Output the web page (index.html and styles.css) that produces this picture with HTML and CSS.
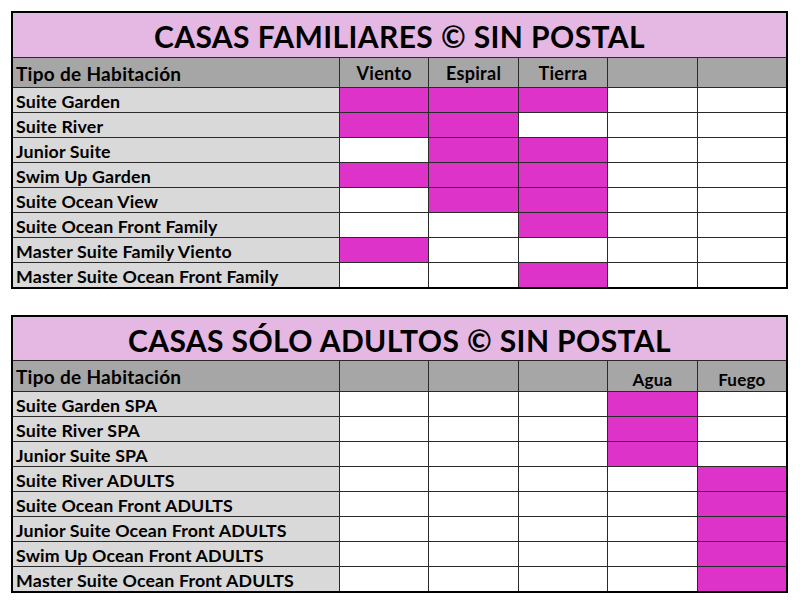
FILE: index.html
```html
<!DOCTYPE html>
<html lang="es">
<head>
<meta charset="utf-8">
<link rel="stylesheet" href="styles.css">
<title>Casas</title>
</head>
<body>
<div class="page">
  <div class="sheet">
    <div class="title">CASAS FAMILIARES © SIN POSTAL</div>
    <div class="hd first">Tipo de Habitación</div>
    <div class="hd">Viento</div>
    <div class="hd">Espiral</div>
    <div class="hd">Tierra</div>
    <div class="hd"></div>
    <div class="hd"></div>

    <div class="name">Suite Garden</div>
    <div class="c on"></div><div class="c on"></div><div class="c on"></div><div class="c"></div><div class="c"></div>
    <div class="name">Suite River</div>
    <div class="c on"></div><div class="c on"></div><div class="c"></div><div class="c"></div><div class="c"></div>
    <div class="name">Junior Suite</div>
    <div class="c"></div><div class="c on"></div><div class="c on"></div><div class="c"></div><div class="c"></div>
    <div class="name">Swim Up Garden</div>
    <div class="c on"></div><div class="c on"></div><div class="c on"></div><div class="c"></div><div class="c"></div>
    <div class="name">Suite Ocean View</div>
    <div class="c"></div><div class="c on"></div><div class="c on"></div><div class="c"></div><div class="c"></div>
    <div class="name">Suite Ocean Front Family</div>
    <div class="c"></div><div class="c"></div><div class="c on"></div><div class="c"></div><div class="c"></div>
    <div class="name">Master Suite Family Viento</div>
    <div class="c on"></div><div class="c"></div><div class="c"></div><div class="c"></div><div class="c"></div>
    <div class="name">Master Suite Ocean Front Family</div>
    <div class="c"></div><div class="c"></div><div class="c on"></div><div class="c"></div><div class="c"></div>
  </div>

  <div class="sheet second">
    <div class="title">CASAS SÓLO ADULTOS © SIN POSTAL</div>
    <div class="hd first">Tipo de Habitación</div>
    <div class="hd"></div>
    <div class="hd"></div>
    <div class="hd"></div>
    <div class="hd small">Agua</div>
    <div class="hd small">Fuego</div>

    <div class="name">Suite Garden SPA</div>
    <div class="c"></div><div class="c"></div><div class="c"></div><div class="c on"></div><div class="c"></div>
    <div class="name">Suite River SPA</div>
    <div class="c"></div><div class="c"></div><div class="c"></div><div class="c on"></div><div class="c"></div>
    <div class="name">Junior Suite SPA</div>
    <div class="c"></div><div class="c"></div><div class="c"></div><div class="c on"></div><div class="c"></div>
    <div class="name">Suite River ADULTS</div>
    <div class="c"></div><div class="c"></div><div class="c"></div><div class="c"></div><div class="c on"></div>
    <div class="name">Suite Ocean Front ADULTS</div>
    <div class="c"></div><div class="c"></div><div class="c"></div><div class="c"></div><div class="c on"></div>
    <div class="name">Junior Suite Ocean Front ADULTS</div>
    <div class="c"></div><div class="c"></div><div class="c"></div><div class="c"></div><div class="c on"></div>
    <div class="name">Swim Up Ocean Front ADULTS</div>
    <div class="c"></div><div class="c"></div><div class="c"></div><div class="c"></div><div class="c on"></div>
    <div class="name">Master Suite Ocean Front ADULTS</div>
    <div class="c"></div><div class="c"></div><div class="c"></div><div class="c"></div><div class="c on"></div>
  </div>
</div>
</body>
</html>
```

FILE: styles.css
```css
html, body {
  margin: 0;
  padding: 0;
  background: #ffffff;
}

.page {
  padding: 11px 0 0 11px;
  display: flex;
  flex-direction: column;
  gap: 26px;
  font-family: Lato, "Open Sans", sans-serif;
  font-weight: 700;
  color: #000000;
}

.sheet {
  width: 773px;
  border: 2px solid #000000;
  background: #2a2a2a;
  display: grid;
  grid-template-columns: 326px repeat(5, 1fr);
  grid-template-rows: 44px 29px repeat(8, 24px);
  gap: 1px;
}

.sheet.second {
  grid-template-rows: 43px 30px repeat(8, 24px);
}

.title {
  grid-column: 1 / -1;
  background: #e5b7e3;
  display: flex;
  align-items: center;
  justify-content: center;
  font-size: 30px;
  font-weight: 700;
  letter-spacing: 0.4px;
  padding-top: 2px;
}

.hd {
  background: #a6a6a6;
  display: flex;
  align-items: center;
  justify-content: center;
  font-size: 18px;
  letter-spacing: 0.3px;
  padding-top: 1px;
}

.hd.first {
  justify-content: flex-start;
  padding-left: 3px;
  font-size: 19px;
  letter-spacing: 0.3px;
}

.hd.small {
  font-size: 17px;
  letter-spacing: 0.2px;
  padding-top: 6px;
}

.name {
  background: #d9d9d9;
  display: flex;
  align-items: center;
  padding-left: 3px;
  font-size: 17.8px;
  letter-spacing: 0.15px;
  padding-top: 1px;
}

.c {
  background: #ffffff;
}

.c.on {
  background: #dd33c9;
}
```
